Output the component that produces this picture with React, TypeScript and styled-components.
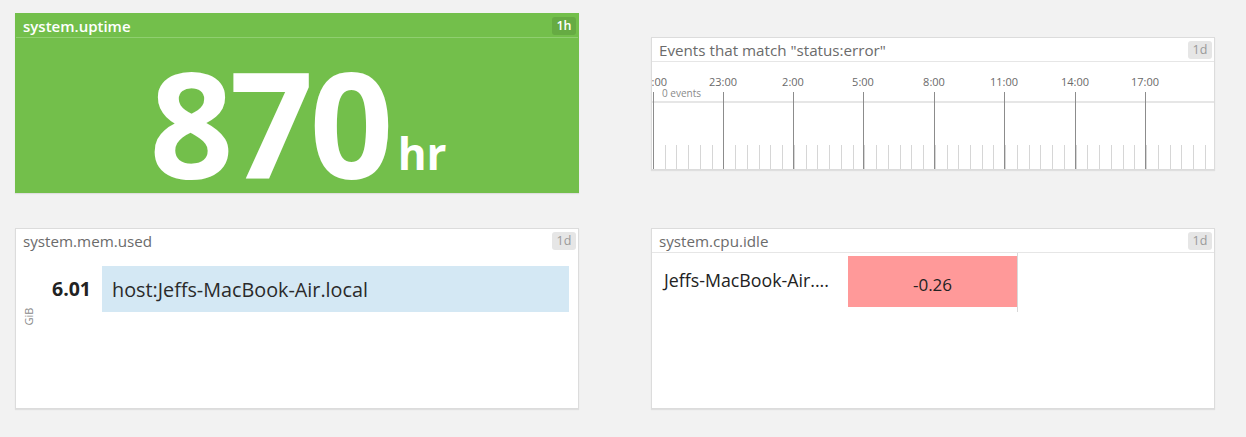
import React from "react";
import styled, { createGlobalStyle } from "styled-components";

const Global = createGlobalStyle`
  html, body { margin: 0; padding: 0; }
  body {
    background: #f2f2f2;
    font-family: "Open Sans", "Noto Sans", "DejaVu Sans", sans-serif;
    width: 1246px;
    height: 437px;
    overflow: hidden;
  }
`;

const Board = styled.div`
  display: grid;
  grid-template-columns: 564px 564px;
  grid-template-rows: 180px 181px;
  column-gap: 72px;
  row-gap: 35px;
  padding: 13px 0 0 15px;
`;

const Panel = styled.div<{ $green?: boolean; $top?: number; $height?: number }>`
  box-sizing: border-box;
  display: flex;
  flex-direction: column;
  margin-top: ${(p) => p.$top ?? 0}px;
  height: ${(p) => (p.$height ? `${p.$height}px` : "auto")};
  background: ${(p) => (p.$green ? "#73bf4b" : "#ffffff")};
  border: 1px solid ${(p) => (p.$green ? "#73bf4b" : "#dcdcdc")};
  box-shadow: 0 1px 1px rgba(0, 0, 0, 0.08);
  overflow: hidden;
`;

const Header = styled.div<{ $green?: boolean; $line?: boolean }>`
  display: flex;
  align-items: center;
  justify-content: space-between;
  height: 23px;
  padding: 0 2px 0 7px;
  border-bottom: 1px solid
    ${(p) => (p.$green ? "#8fcf70" : p.$line ? "#e6e6e6" : "transparent")};
  flex: none;
`;

const Title = styled.span<{ $green?: boolean }>`
  font-size: ${(p) => (p.$green ? "15px" : "15.2px")};
  color: ${(p) => (p.$green ? "#ffffff" : "#6b6b6b")};
  font-weight: ${(p) => (p.$green ? 600 : 400)};
  white-space: nowrap;
`;

const Badge = styled.span<{ $green?: boolean }>`
  display: inline-flex;
  align-items: center;
  justify-content: center;
  width: 24px;
  height: 18px;
  border-radius: 3px;
  font-size: 12.5px;
  background: ${(p) => (p.$green ? "#66ab43" : "#e6e6e6")};
  color: ${(p) => (p.$green ? "#ffffff" : "#9a9a9a")};
  font-weight: ${(p) => (p.$green ? 600 : 400)};
`;

const BigBody = styled.div`
  flex: 1;
  display: flex;
  align-items: flex-end;
  justify-content: center;
  padding: 0 0 0 2px;
  color: #ffffff;
  font-weight: 700;
`;

const BigValue = styled.span`
  font-size: 147px;
  line-height: 140px;
  letter-spacing: -4px;
`;

const BigUnit = styled.span`
  font-size: 44px;
  line-height: 44px;
  margin-left: 8px;
  margin-bottom: 17px;
`;

const TimelineBody = styled.div`
  flex: 1;
  position: relative;
`;

const MemBody = styled.div`
  flex: 1;
  display: flex;
  position: relative;
  padding: 13px 9px 0 0;
`;

const UnitLabel = styled.span`
  position: absolute;
  left: 4px;
  top: 56px;
  font-size: 11px;
  color: #8a8a8a;
  transform: rotate(-90deg);
  transform-origin: center;
`;

const MemValue = styled.span`
  width: 86px;
  flex: none;
  text-align: right;
  font-size: 19.5px;
  font-weight: 700;
  color: #222;
  line-height: 46px;
  padding-right: 11px;
  box-sizing: border-box;
`;

const MemBar = styled.div`
  flex: 1;
  height: 46px;
  background: #d4e8f4;
  display: flex;
  align-items: center;
  padding-left: 10px;
  font-size: 19.8px;
  color: #2a2a2a;
`;

const CpuBody = styled.div`
  flex: 1;
  display: flex;
  align-items: flex-start;
`;

const CpuName = styled.span`
  width: 196px;
  flex: none;
  padding: 16px 0 0 12px;
  box-sizing: border-box;
  font-size: 17.8px;
  color: #222;
  white-space: nowrap;
  line-height: 22px;
`;

const CpuCell = styled.div`
  display: flex;
  align-items: flex-start;
  border-right: 1px solid #d8d8d8;
  height: 59px;
`;

const CpuBar = styled.div`
  width: 169px;
  height: 51px;
  margin-top: 3px;
  background: #ff9999;
  display: flex;
  align-items: center;
  justify-content: center;
  padding-top: 5px;
  box-sizing: border-box;
  font-size: 17px;
  color: #222;
`;

const majors = [
  { x: 1, label: "20:00" },
  { x: 71, label: "23:00" },
  { x: 141, label: "2:00" },
  { x: 211, label: "5:00" },
  { x: 282, label: "8:00" },
  { x: 352, label: "11:00" },
  { x: 423, label: "14:00" },
  { x: 493, label: "17:00" },
];

function Timeline() {
  const minors: number[] = [];
  for (let k = 0; k < 48; k++) {
    const x = 1 + k * 11.74;
    if (x > 558) break;
    minors.push(Math.round(x) + 0.5);
  }
  return (
    <svg width="562" height="107" viewBox="0 0 562 107" style={{ display: "block" }}>
      <rect x="0" y="0" width="562" height="107" fill="#ffffff" />
      <rect x="0" y="39" width="562" height="2" fill="#e6e6e6" />
      {minors.map((x, i) => (
        <line key={i} x1={x} x2={x} y1="83" y2="107" stroke="#d6d6d6" strokeWidth="1" />
      ))}
      {majors.map((m) => (
        <g key={m.label}>
          <line x1={m.x + 0.5} x2={m.x + 0.5} y1="30" y2="107" stroke="#8c8c8c" strokeWidth="1" />
          <text
            x={m.x}
            y="24"
            textAnchor="middle"
            fontSize="11"
            fill="#6a6a6a"
            fontFamily="'Open Sans', 'DejaVu Sans', sans-serif"
          >
            {m.label}
          </text>
        </g>
      ))}
      <text x="10" y="35" fontSize="10" fill="#8a8a8a" fontFamily="'Open Sans', 'DejaVu Sans', sans-serif">
        0 events
      </text>
    </svg>
  );
}

export default function App() {
  return (
    <>
      <Global />
      <Board>
        <Panel $green>
          <Header $green>
            <Title $green>system.uptime</Title>
            <Badge $green>1h</Badge>
          </Header>
          <BigBody>
            <BigValue>870</BigValue>
            <BigUnit>hr</BigUnit>
          </BigBody>
        </Panel>

        <Panel $top={24} $height={133}>
          <Header $line>
            <Title>Events that match "status:error"</Title>
            <Badge>1d</Badge>
          </Header>
          <TimelineBody>
            <Timeline />
          </TimelineBody>
        </Panel>

        <Panel>
          <Header>
            <Title>system.mem.used</Title>
            <Badge>1d</Badge>
          </Header>
          <MemBody>
            <UnitLabel>GiB</UnitLabel>
            <MemValue>6.01</MemValue>
            <MemBar>host:Jeffs-MacBook-Air.local</MemBar>
          </MemBody>
        </Panel>

        <Panel>
          <Header $line>
            <Title>system.cpu.idle</Title>
            <Badge>1d</Badge>
          </Header>
          <CpuBody>
            <CpuName>Jeffs-MacBook-Air....</CpuName>
            <CpuCell>
              <CpuBar>-0.26</CpuBar>
            </CpuCell>
          </CpuBody>
        </Panel>
      </Board>
    </>
  );
}
